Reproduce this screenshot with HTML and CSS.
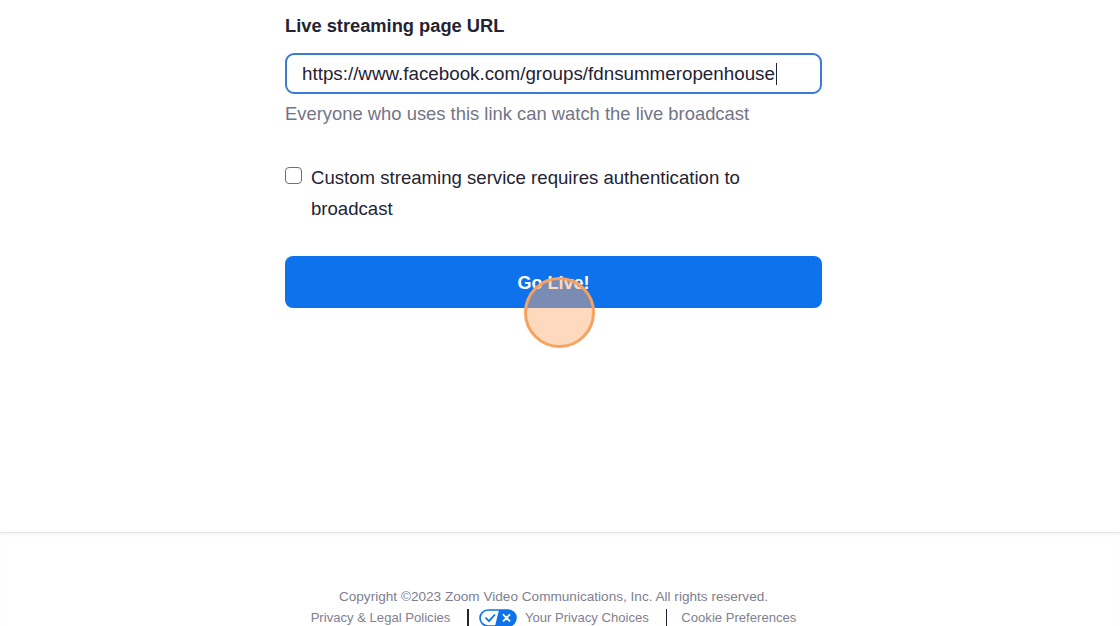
FILE: index.html
```html
<!DOCTYPE html>
<html lang="en">
<head>
    <meta charset="UTF-8">
    <meta name="viewport" content="width=device-width, initial-scale=1.0">
    <title>Live Streaming</title>

    <link rel="stylesheet" href="styles.css">
</head>
<body>
<div class="page">
    <div class="stream-form">
        <h2 class="field-label">Live streaming page URL</h2>
        <div class="url-input">
            <span class="url-text">https://www.facebook.com/groups/fdnsummeropenhouse</span><span class="caret"></span>
        </div>
        <p class="hint">Everyone who uses this link can watch the live broadcast</p>

        <label class="auth-row">
            <span class="checkbox"></span>
            <span class="auth-text">Custom streaming service requires authentication to broadcast</span>
        </label>

        <div class="go-wrap">
            <button class="go-live" type="button">Go Live!</button>
            <!-- click marker -->
            <span class="click-dot"></span>
        </div>
    </div>
</div>

<footer>
    <div class="footer-inner">
        <p class="copyright">Copyright ©2023 Zoom Video Communications, Inc. All rights reserved.</p>
        <div class="footer-links">
            <a href="#">Privacy &amp; Legal Policies</a>
            <span class="sep sep-first"></span>
            <a href="#" class="choices">
                <svg class="choices-icon" width="38" height="18" viewBox="0 0 38 18">
                    <rect x="1" y="1" width="36" height="16" rx="8" fill="#fff" stroke="#0e72ed" stroke-width="1.6"/>
                    <path d="M20 1 H29 A8 8 0 0 1 29 17 H16 Z" fill="#0e72ed"/>
                    <path d="M7 9.2 L10 12.2 L15.5 6" fill="none" stroke="#0e72ed" stroke-width="1.8" stroke-linecap="round" stroke-linejoin="round"/>
                    <path d="M24.5 5.8 L30.5 11.8 M30.5 5.8 L24.5 11.8" stroke="#fff" stroke-width="1.8" stroke-linecap="round"/>
                </svg>
                Your Privacy Choices
            </a>
            <span class="sep sep-last"></span>
            <a href="#">Cookie Preferences</a>
        </div>
    </div>
</footer>
</body>
</html>
```

FILE: styles.css
```css
/* Base */
body {
    margin: 0;
    padding: 0;
    background-color: #ffffff;
    font-family: "Liberation Sans", Arial, sans-serif;
    color: #232333;
}

.page {
    padding-right: 13px;
    height: 532px;
}

/* Form column */
.stream-form {
    width: 537px;
    margin: 0 auto;
    padding-top: 13px;
}

.field-label {
    margin: 0;
    font-size: 18.3px;
    line-height: 26px;
    font-weight: bold;
    color: #232333;
}

.url-input {
    margin-top: 14px;
    height: 41px;
    box-sizing: border-box;
    border: 2px solid #3a7bd5;
    border-radius: 9px;
    padding: 0 15px;
    display: flex;
    align-items: center;
    font-size: 18.8px;
    color: #232333;
}

.caret {
    display: inline-block;
    width: 1.5px;
    height: 22px;
    background-color: #232333;
    margin-left: 1px;
}

.hint {
    margin: 8px 0 0;
    font-size: 18.4px;
    line-height: 24px;
    color: #747487;
}

/* Checkbox row */
.auth-row {
    display: flex;
    align-items: flex-start;
    gap: 9px;
    margin-top: 37px;
    cursor: pointer;
}

.checkbox {
    flex: none;
    width: 17px;
    height: 17px;
    box-sizing: border-box;
    border: 1.5px solid #6e6e7a;
    border-radius: 4px;
    margin-top: 4px;
    background-color: #fff;
}

.auth-text {
    font-size: 18.6px;
    line-height: 31px;
    color: #232333;
    max-width: 440px;
    margin-top: -1px;
}

/* Button */
.go-wrap {
    position: relative;
    margin-top: 32px;
}

.go-live {
    display: block;
    width: 100%;
    height: 52px;
    padding-top: 4px;
    border: none;
    border-radius: 8px;
    background-color: #0e72ed;
    color: #fff;
    font-family: "Liberation Sans", Arial, sans-serif;
    font-size: 18px;
    font-weight: bold;
    cursor: pointer;
}

.click-dot {
    position: absolute;
    left: 239px;
    top: 21px;
    width: 71px;
    height: 71px;
    box-sizing: border-box;
    border: 3px solid #f7a25f;
    border-radius: 50%;
    background-color: rgba(255, 170, 110, 0.45);
    pointer-events: none;
}

/* Footer */
footer {
    border-top: 1px solid #e4e4e8;
    box-shadow: inset 0 3px 4px -2px rgba(0, 0, 0, 0.06);
    height: 93px;
    overflow: hidden;
}

.footer-inner {
    padding-right: 13px;
    padding-top: 54px;
    text-align: center;
    color: #80808f;
    font-size: 13.6px;
}

.copyright {
    margin: 0;
    line-height: 19px;
}

.footer-links {
    display: flex;
    justify-content: center;
    align-items: center;
    margin-top: 2px;
    line-height: 19px;
    font-size: 13.1px;
}

.footer-links a {
    color: #80808f;
    text-decoration: none;
}

.sep {
    width: 1.5px;
    height: 17px;
    background-color: #232333;
}

.sep-first {
    margin: 0 10px 0 17px;
}

.sep-last {
    margin: 0 14px 0 17px;
}

.choices {
    display: flex;
    align-items: center;
    gap: 8px;
}

.choices-icon {
    display: block;
}
```
